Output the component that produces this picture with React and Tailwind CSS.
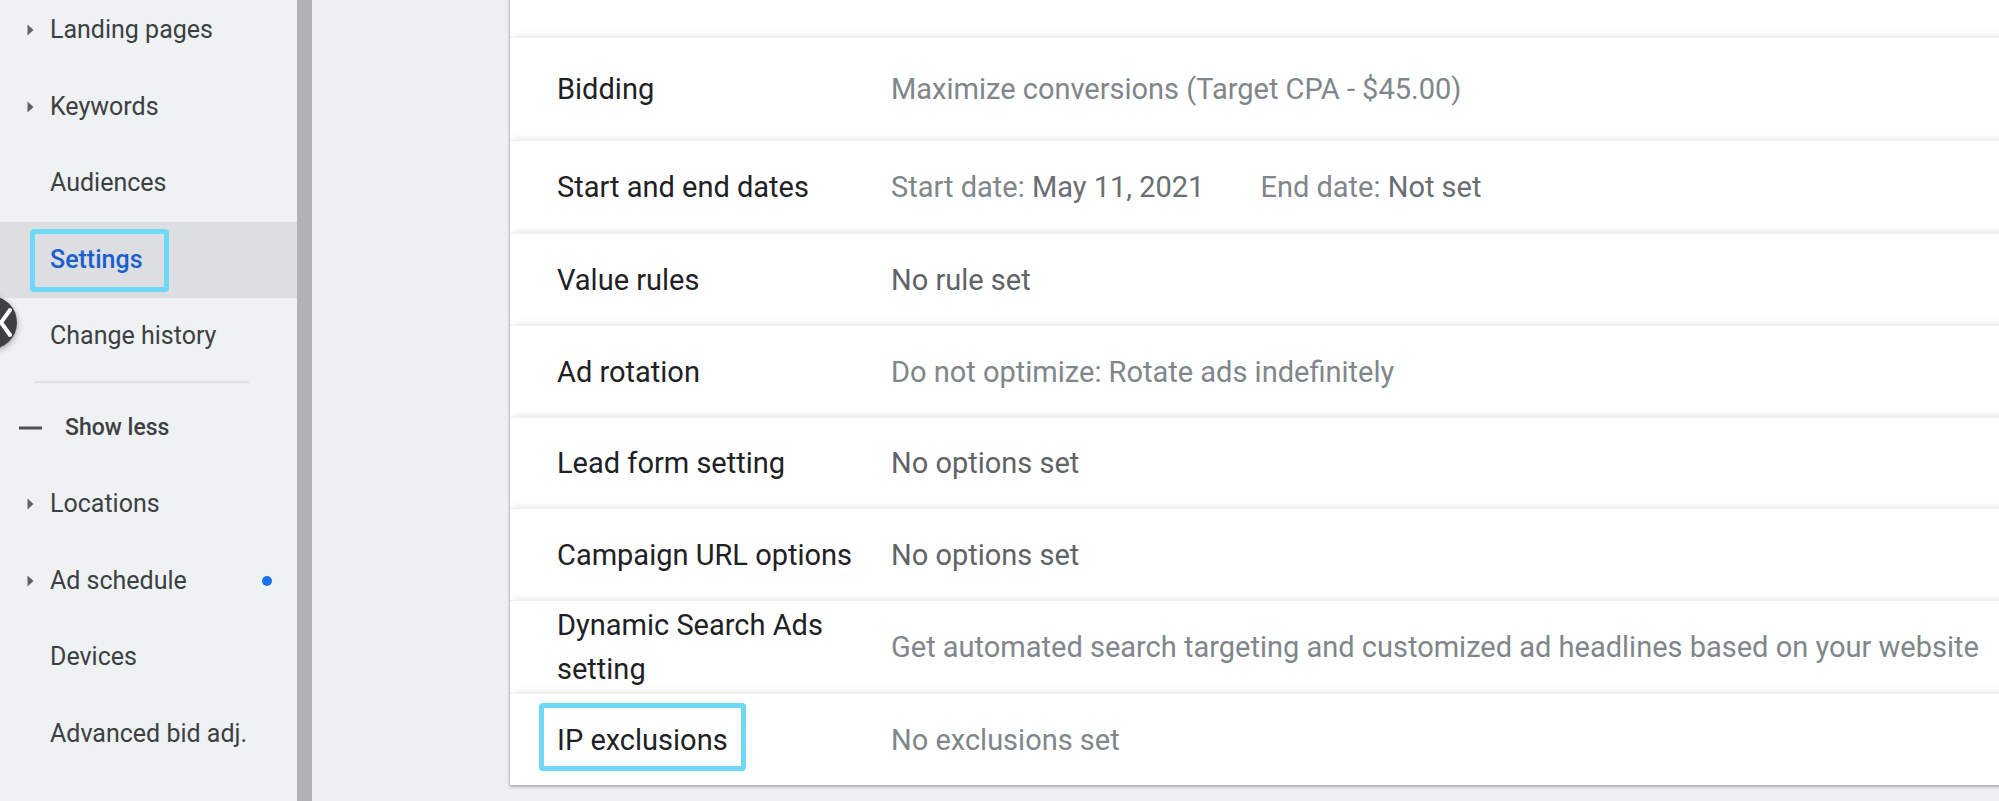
import React from "react";

function Tri() {
  return (
    <svg width="7" height="12" viewBox="0 0 7 12" className="absolute left-[27px] top-1/2 -translate-y-1/2">
      <path d="M0.5 0.5 L6.5 6 L0.5 11.5 Z" fill="#5f6368" />
    </svg>
  );
}

function NavItem({ label, arrow, dot, active, extraClass = "" }) {
  return (
    <div
      className={
        "relative h-[76.5px] flex items-center shrink-0 " +
        (active ? "bg-[#dcdee2] " : "") +
        extraClass
      }
    >
      {arrow && <Tri />}
      {active && (
        <div className="absolute left-[30px] top-[7px] w-[139px] h-[63px] border-[5px] border-[#6dd9f6] rounded-[4px]" />
      )}
      <span
        className={
          "pl-[50px] text-[25px] leading-[30px] whitespace-nowrap " +
          (active ? "text-[#1a5fcc] font-medium" : "text-[#3c4043]")
        }
      >
        {label}
      </span>
      {dot && (
        <span className="absolute left-[262px] top-1/2 -translate-y-1/2 w-[10px] h-[10px] rounded-full bg-[#1a73e8]" />
      )}
    </div>
  );
}

function Row({ h, label, children, extra }) {
  return (
    <div
      className={
        "relative flex items-center bg-white border-t border-[#efefef] shadow-[0_-5px_6px_-3px_rgba(0,0,0,0.08)] " +
        h
      }
    >
      {extra}
      <div className="w-[381px] pl-[47px] shrink-0 text-[29px] leading-[44px] text-[#202124]">
        {label}
      </div>
      <div className="text-[29px] leading-[44px] whitespace-nowrap">{children}</div>
    </div>
  );
}

export default function App() {
  const light = "text-[#80868b]";
  const dark = "text-[#5f6368]";
  return (
    <div className="w-[1999px] h-[801px] flex overflow-hidden bg-[#eef1f2] font-['Roboto',sans-serif]">
      {/* Sidebar */}
      <div className="relative w-[297px] shrink-0 bg-[#eff2f3] overflow-hidden">
        <div className="flex flex-col -mt-[8px]">
          <NavItem label="Landing pages" arrow />
          <NavItem label="Keywords" arrow />
          <NavItem label="Audiences" />
          <NavItem label="Settings" active />
          <NavItem label="Change history" />
          <div className="h-[15px] shrink-0 flex items-center">
            <div className="ml-[34px] w-[215px] h-[2px] bg-[#dfe1e4]" />
          </div>
          <div className="relative h-[76.5px] flex items-center shrink-0">
            <span className="absolute left-[19px] top-1/2 -translate-y-1/2 w-[23px] h-[3px] bg-[#4d5156]" />
            <span className="pl-[65px] text-[23px] font-medium text-[#3c4043]">Show less</span>
          </div>
          <NavItem label="Locations" arrow />
          <NavItem label="Ad schedule" arrow dot />
          <NavItem label="Devices" />
          <NavItem label="Advanced bid adj." />
          <NavItem label="Drafts & experiments" extraClass="mt-[10px]" />
        </div>
        {/* collapse button */}
        <div className="absolute left-[-36px] top-[296px] w-[53px] h-[53px] rounded-full bg-[#3c4043] shadow-[0_2px_6px_rgba(0,0,0,0.35)]">
          <svg width="53" height="53" viewBox="0 0 53 53" className="absolute left-0 top-0">
            <path d="M46 14 L37 26.5 L46 39" stroke="white" strokeWidth="4" fill="none" strokeLinecap="round" />
          </svg>
        </div>
      </div>

      {/* scrollbar */}
      <div className="w-[15px] shrink-0 bg-[#b1b2b4]" />

      {/* Main */}
      <div className="flex-1 pl-[198px] bg-[#eef1f2]">
        <div className="w-[1600px] -mt-[60px] bg-white shadow-[0_2px_3px_rgba(0,0,0,0.3),-1px_0_2px_rgba(0,0,0,0.08)]">
          <div className="relative flex items-center bg-white h-[97px] pb-[9px]">
            <div className="w-[381px] pl-[47px] shrink-0 text-[29px] leading-[44px] text-[#202124]">Budget</div>
            <div className={"text-[29px] leading-[44px] " + dark}>$50.00/day</div>
          </div>
          <Row h="h-[103px]" label="Bidding">
            <span className={light}>Maximize conversions (Target CPA - $45.00)</span>
          </Row>
          <Row h="h-[93px]" label="Start and end dates">
            <span className={light}>Start date: </span>
            <span className="text-[#6a6e73]">May 11, 2021</span>
            <span className={"ml-[56px] " + light}>End date: </span>
            <span className="text-[#6a6e73]">Not set</span>
          </Row>
          <Row h="h-[92px]" label="Value rules">
            <span className={dark}>No rule set</span>
          </Row>
          <Row h="h-[92px]" label="Ad rotation">
            <span className={light}>Do not optimize: Rotate ads indefinitely</span>
          </Row>
          <Row h="h-[91px]" label="Lead form setting">
            <span className={dark}>No options set</span>
          </Row>
          <Row h="h-[92px]" label="Campaign URL options">
            <span className={dark}>No options set</span>
          </Row>
          <Row
            h="h-[93px]"
            label={
              <>
                Dynamic Search Ads
                <br />
                setting
              </>
            }
          >
            <span className={light}>
              Get automated search targeting and customized ad headlines based on your website
            </span>
          </Row>
          <Row
            h="h-[92px]"
            label="IP exclusions"
            extra={
              <div className="absolute left-[29px] top-[9px] w-[207px] h-[68px] border-[5px] border-[#6dd9f6] rounded-[4px]" />
            }
          >
            <span className={light}>No exclusions set</span>
          </Row>
        </div>
      </div>
    </div>
  );
}
